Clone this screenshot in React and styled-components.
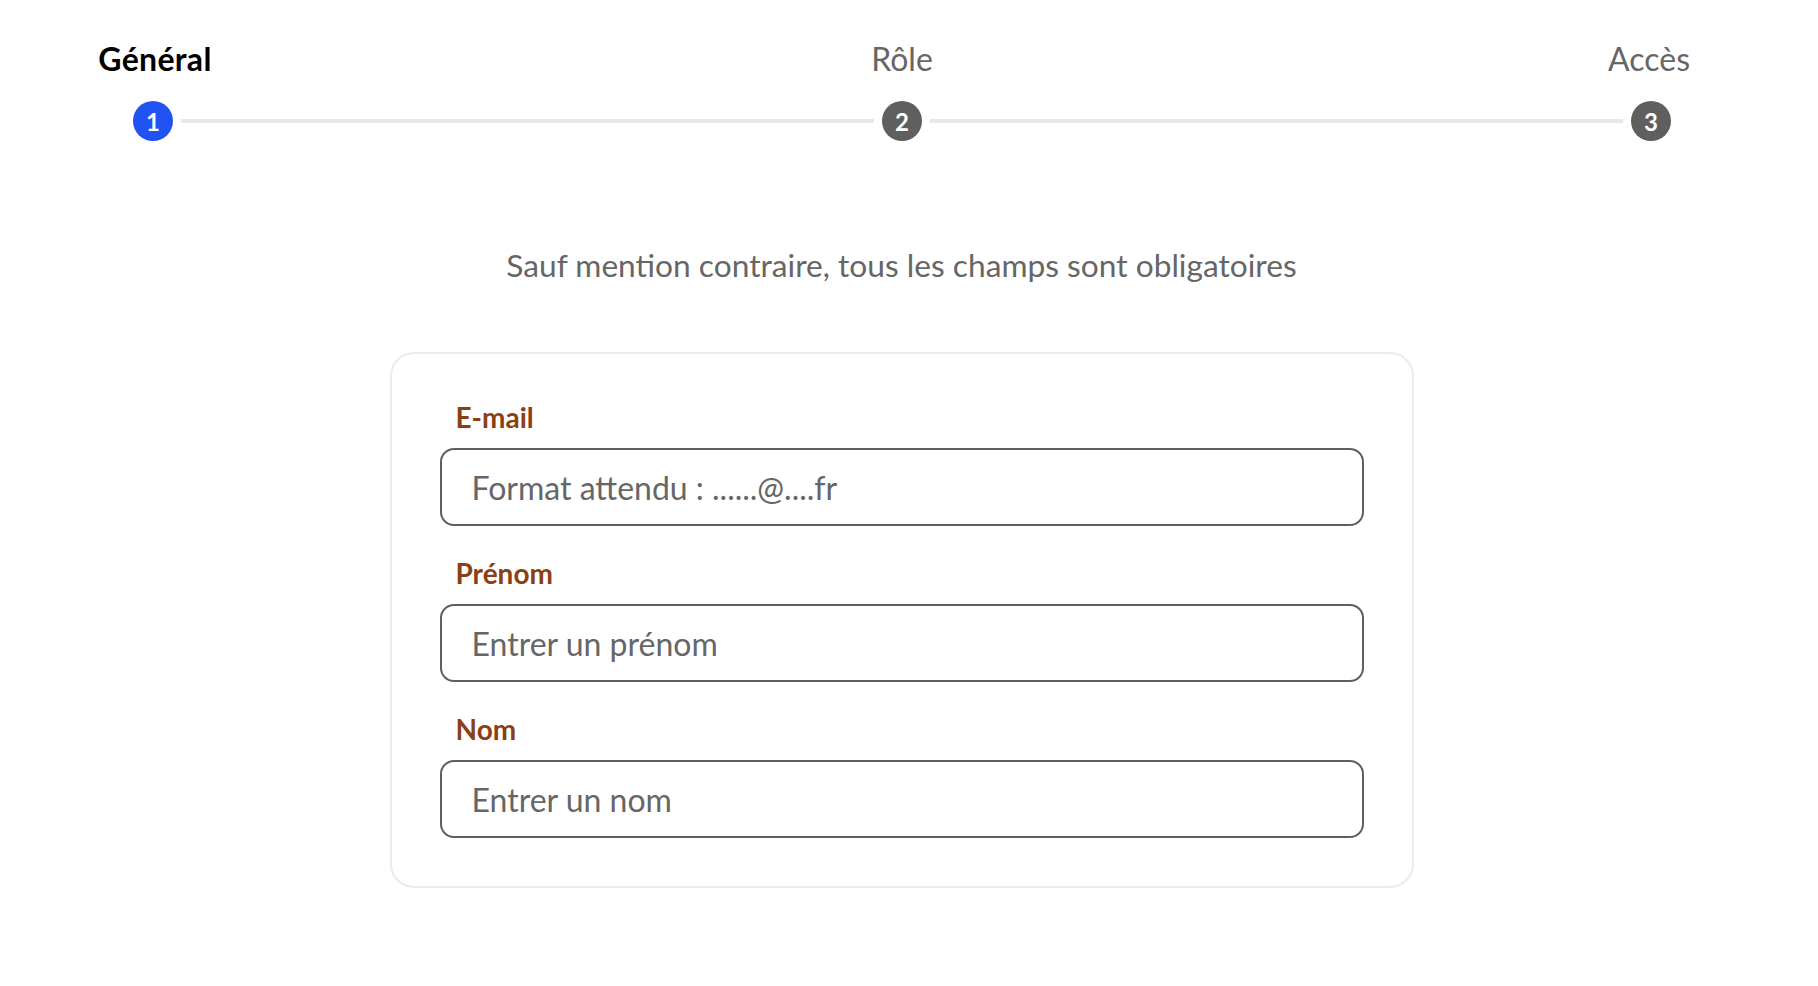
import React from 'react';
import styled, { createGlobalStyle } from 'styled-components';

const GlobalStyle = createGlobalStyle`
  body {
    margin: 0;
    background: #ffffff;
    font-family: Lato, "Open Sans", sans-serif;
  }
`;

const Page = styled.div`
  padding-right: 15px;
  padding-top: 40px;
`;

const Stepper = styled.div`
  display: flex;
  align-items: flex-end;
  padding: 0 132px 0 133px;
`;

const Step = styled.div`
  width: 40px;
  display: flex;
  flex-direction: column;
  align-items: center;
  gap: 23px;
`;

const StepLabel = styled.div`
  white-space: nowrap;
  font-size: 32px;
  line-height: 38px;
  font-weight: ${p => (p.$active ? 700 : 400)};
  color: ${p => (p.$active ? '#000000' : '#666666')};
  letter-spacing: ${p => (p.$active ? '0.3px' : '0')};
  transform: translateX(${p => p.$shift}px);
`;

const StepDot = styled.div`
  width: 40px;
  height: 40px;
  border-radius: 50%;
  display: flex;
  align-items: center;
  justify-content: center;
  background: ${p => (p.$active ? '#2152f2' : '#5f5f5f')};
  color: #ffffff;
  font-size: 24px;
  font-weight: 700;
`;

const Connector = styled.div`
  flex: 1;
  height: 4px;
  margin: 0 8px 18px;
  background: #e8e8e8;
`;

const Hint = styled.p`
  margin: 105px 0 0;
  text-align: center;
  font-size: 31.7px;
  line-height: 38px;
  color: #666666;
`;

const Card = styled.form`
  width: 1024px;
  box-sizing: border-box;
  margin: 68px auto 0;
  padding: 46px 48px 48px;
  border: 2px solid #ebebeb;
  border-radius: 24px;
  display: flex;
  flex-direction: column;
  gap: 30px;
`;

const Field = styled.div`
  display: flex;
  flex-direction: column;
  gap: 14px;
`;

const Label = styled.label`
  padding-left: 16px;
  font-size: 28px;
  line-height: 34px;
  font-weight: 700;
  color: #8b3f14;
`;

const Input = styled.input`
  height: 78px;
  box-sizing: border-box;
  padding: 0 30px;
  border: 2px solid #5f5f5f;
  border-radius: 14px;
  font-family: Lato, "Open Sans", sans-serif;
  font-size: 32px;
  color: #333333;
  outline: none;
  &::placeholder {
    color: #666666;
  }
`;

const steps = [
  { label: 'Général', shift: 2 },
  { label: 'Rôle', shift: 0 },
  { label: 'Accès', shift: -2 },
];

const fields = [
  { id: 'email', label: 'E-mail', placeholder: 'Format attendu : ......@....fr' },
  { id: 'prenom', label: 'Prénom', placeholder: 'Entrer un prénom' },
  { id: 'nom', label: 'Nom', placeholder: 'Entrer un nom' },
];

export default function App() {
  return (
    <Page>
      <GlobalStyle />
      <Stepper>
        {steps.map((s, i) => (
          <React.Fragment key={s.label}>
            {i > 0 && <Connector />}
            <Step>
              <StepLabel $active={i === 0} $shift={s.shift}>{s.label}</StepLabel>
              <StepDot $active={i === 0}>{i + 1}</StepDot>
            </Step>
          </React.Fragment>
        ))}
      </Stepper>
      <Hint>Sauf mention contraire, tous les champs sont obligatoires</Hint>
      <Card>
        {fields.map(f => (
          <Field key={f.id}>
            <Label htmlFor={f.id}>{f.label}</Label>
            <Input id={f.id} placeholder={f.placeholder} />
          </Field>
        ))}
      </Card>
    </Page>
  );
}
